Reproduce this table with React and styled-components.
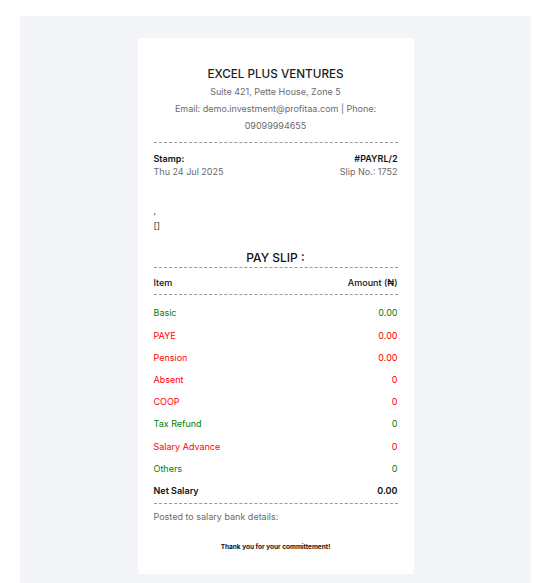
import React from 'react';
import styled, { createGlobalStyle } from 'styled-components';

const GlobalStyle = createGlobalStyle`
  body {
    margin: 0;
    background: #ffffff;
    font-family: Inter, "Noto Sans", sans-serif;
  }
`

const Page = styled.div`
  padding: 16px 22px 0 20px;
  height: 583px;
  box-sizing: border-box;
`

const Panel = styled.div`
  background: #f4f5f9;
  height: 100%;
  padding-top: 22px;
  box-sizing: border-box;
  display: flex;
  justify-content: center;
`

const Card = styled.div`
  width: 276px;
  height: 536px;
  background: #ffffff;
  padding: 27px 16px 0;
  box-sizing: border-box;
  color: #222;
  font-size: 9px;
`

const Header = styled.div`
  text-align: center;
`

const Company = styled.div`
  font-size: 11.7px;
  font-weight: 500;
  color: #1c1c1c;
  line-height: 18px;
  margin-bottom: 1px;
`

const Info = styled.div`
  color: #6b6b6b;
  line-height: 16.8px;
`

const Dashed = styled.div`
  border-top: 1px dashed #9a9a9a;
  margin: ${p => p.$m || '0'};
`

const MetaRow = styled.div`
  display: flex;
  justify-content: space-between;
  line-height: 13px;
`

const Strong = styled.span`
  font-weight: 600;
  color: #111;
`

const Muted = styled.span`
  color: #6b6b6b;
`

const Recipient = styled.div`
  margin-top: 25px;
  line-height: 15px;
  color: #444;
`

const SlipTitle = styled.div`
  text-align: center;
  font-size: 12px;
  font-weight: 500;
  color: #111;
  margin-top: 17px;
  line-height: 16px;
`

const Row = styled.div`
  display: flex;
  justify-content: space-between;
  line-height: 13px;
  padding: ${p => p.$pad || '0'};
  color: ${p => p.$color || '#111'};
  font-weight: ${p => (p.$bold ? 600 : 400)};
`

const HeadCell = styled.span`
  font-weight: 500;
`

const Posted = styled.div`
  color: #6b6b6b;
  margin-top: 6px;
  line-height: 13px;
`

const Thanks = styled.div`
  text-align: center;
  font-size: 6.5px;
  font-weight: 700;
  color: #111;
  margin-top: 20px;
`

const items = [
  { name: 'Basic', value: '0.00', color: 'green' },
  { name: 'PAYE', value: '0.00', color: 'red' },
  { name: 'Pension', value: '0.00', color: 'red' },
  { name: 'Absent', value: '0', color: 'red' },
  { name: 'COOP', value: '0', color: 'red' },
  { name: 'Tax Refund', value: '0', color: 'green' },
  { name: 'Salary Advance', value: '0', color: 'red' },
  { name: 'Others', value: '0', color: 'green' },
]

const App = () => {
  return (
    <Page>
      <GlobalStyle />
      <Panel>
        <Card>
          <Header>
            <Company>EXCEL PLUS VENTURES</Company>
            <Info>Suite 421, Pette House, Zone 5</Info>
            <Info>Email: demo.investment@profitaa.com | Phone: 09099994655</Info>
          </Header>
          <Dashed $m="8px 0 9px" />
          <MetaRow>
            <Strong>Stamp:</Strong>
            <Strong>#PAYRL/2</Strong>
          </MetaRow>
          <MetaRow>
            <Muted>Thu 24 Jul 2025</Muted>
            <Muted>Slip No.: 1752</Muted>
          </MetaRow>
          <Recipient>
            <div>,</div>
            <div>[]</div>
          </Recipient>
          <SlipTitle>PAY SLIP :</SlipTitle>
          <Dashed $m="1px 0 0" />
          <Row $pad="8px 0 5px">
            <HeadCell>Item</HeadCell>
            <HeadCell>Amount (₦)</HeadCell>
          </Row>
          <Dashed $m="0 0 6px" />
          {items.map(it => (
            <Row key={it.name} $pad="5px 0 4.2px" $color={it.color}>
              <span>{it.name}</span>
              <span>{it.value}</span>
            </Row>
          ))}
          <Row $pad="5px 0 3px" $bold>
            <span>Net Salary</span>
            <span>0.00</span>
          </Row>
          <Dashed $m="3px 0 0" />
          <Posted>Posted to salary bank details:</Posted>
          <Thanks>Thank you for your committement!</Thanks>
        </Card>
      </Panel>
    </Page>
  )
}

export default App
